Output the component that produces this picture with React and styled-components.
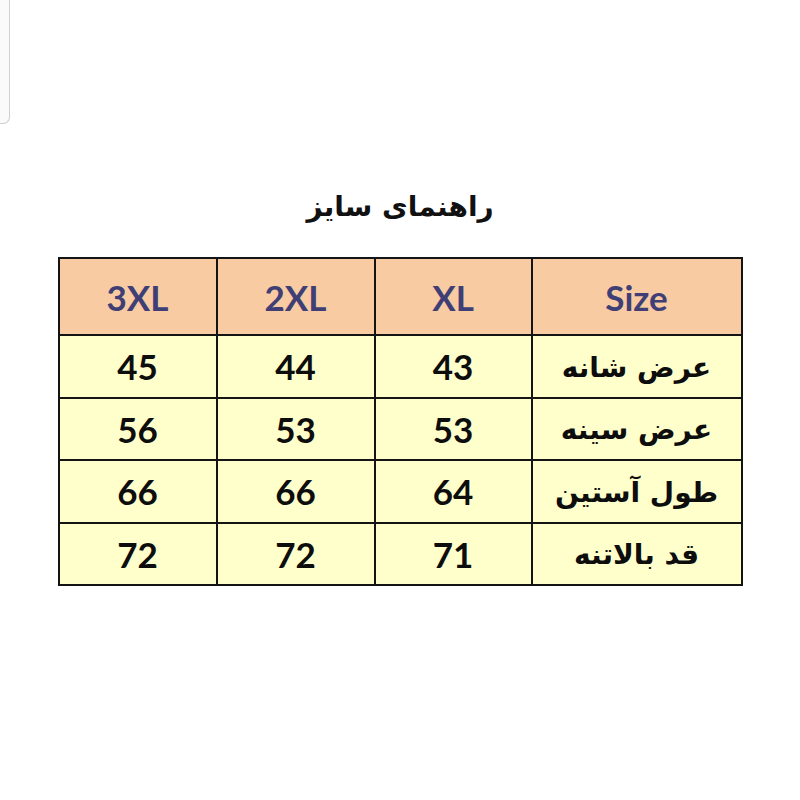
import React from "react";
import styled, { createGlobalStyle } from "styled-components";

const GlobalStyle = createGlobalStyle`
  body {
    margin: 0;
    background: #ffffff;
    font-family: "Lato", "DejaVu Sans", sans-serif;
  }
`;

const Page = styled.div`
  width: 800px;
  height: 800px;
  display: flex;
  flex-direction: column;
  align-items: center;
  background: #ffffff;
`;

const CardEdge = styled.div`
  align-self: flex-start;
  width: 9px;
  height: 123px;
  background: #fafafa;
  border-right: 1px solid #cfcfcf;
  border-bottom: 1px solid #cfcfcf;
  border-bottom-right-radius: 7px;
`;

const Title = styled.h1`
  margin: 63px 0 0 0;
  height: 40px;
  line-height: 40px;
  font-family: "DejaVu Sans", sans-serif;
  font-size: 28px;
  font-weight: bold;
  color: #111111;
  direction: rtl;
`;

const SizeTable = styled.table`
  margin-top: 30px;
  border-collapse: collapse;
  width: 683px;
  table-layout: fixed;
`;

const Row = styled.tr`
  height: ${(p) => (p.head ? "77px" : "62.5px")};
  background: ${(p) => (p.head ? "#f8cba2" : "#ffffcc")};
`;

const Cell = styled.td`
  border: 2px solid #141414;
  padding: 0;
  text-align: center;
  vertical-align: middle;
  font-family: "Lato", "DejaVu Sans", sans-serif;
  font-weight: bold;
  font-size: 35px;
  color: ${(p) => (p.head ? "#3f3f76" : "#0d0d0d")};
`;

const LabelCell = styled(Cell)`
  font-family: ${(p) => (p.head ? '"Lato", sans-serif' : '"DejaVu Sans", sans-serif')};
  font-size: ${(p) => (p.head ? "35px" : "28px")};
  padding-top: ${(p) => (p.head ? "0" : "2px")};
  direction: rtl;
`;

const columns = ["3XL", "2XL", "XL"];

const rows = [
  { label: "عرض شانه", values: ["45", "44", "43"] },
  { label: "عرض سینه", values: ["56", "53", "53"] },
  { label: "طول آستین", values: ["66", "66", "64"] },
  { label: "قد بالاتنه", values: ["72", "72", "71"] },
];

export default function App() {
  return (
    <>
      <GlobalStyle />
      <Page>
        <CardEdge />
        <Title>راهنمای سایز</Title>
        <SizeTable>
          <colgroup>
            <col style={{ width: 158 }} />
            <col style={{ width: 158 }} />
            <col style={{ width: 157 }} />
            <col style={{ width: 210 }} />
          </colgroup>
          <tbody>
            <Row head>
              {columns.map((c) => (
                <Cell head key={c}>
                  {c}
                </Cell>
              ))}
              <LabelCell head>Size</LabelCell>
            </Row>
            {rows.map((r) => (
              <Row key={r.label}>
                {r.values.map((v, i) => (
                  <Cell key={i}>{v}</Cell>
                ))}
                <LabelCell>{r.label}</LabelCell>
              </Row>
            ))}
          </tbody>
        </SizeTable>
      </Page>
    </>
  );
}
